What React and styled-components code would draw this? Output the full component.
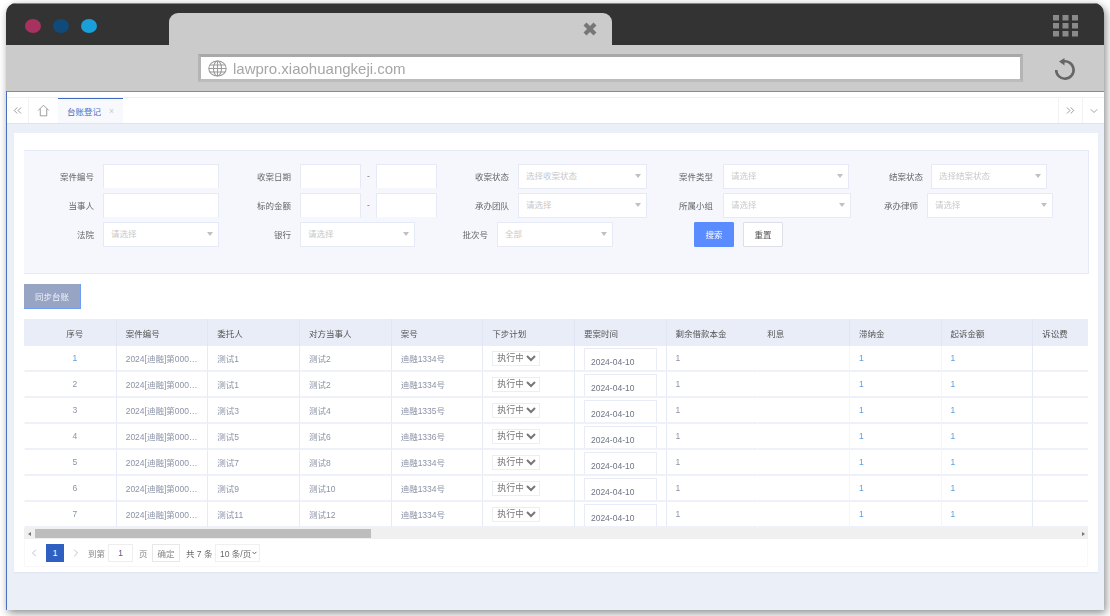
import React from "react";
import styled, { createGlobalStyle } from "styled-components";
import { ChevronsLeft, ChevronsRight, ChevronDown, ChevronLeft, ChevronRight } from "lucide-react";

const GlobalStyle = createGlobalStyle`
  html, body {
    margin: 0;
    height: 616px;
    overflow: hidden;
    background: #fff;
  }
  * { box-sizing: border-box; }
`;

const Browser = styled.div`
  display: flex;
  flex-direction: column;
  width: 1098px;
  height: 607px;
  margin: 3px 0 0 6px;
  border-radius: 10px 10px 0 0;
  overflow: hidden;
  box-shadow: 2px 3px 8px rgba(0, 0, 0, 0.45);
  font-family: "Liberation Sans", "Noto Sans CJK SC", sans-serif;
  font-size: 8.5px;
  filter: blur(0.4px);
`;

const TitleBar = styled.div`
  display: flex;
  align-items: center;
  height: 42px;
  padding: 2px 26px 0 19px;
  background: #333;
  border-top: 1px solid #888;
`;

const Dot = styled.span`
  width: 16px;
  height: 14px;
  margin-right: 12px;
  border-radius: 50%;
  background: ${(p) => p.$color};
`;

const BrowserTab = styled.div`
  display: flex;
  align-items: center;
  justify-content: flex-end;
  align-self: flex-end;
  width: 443px;
  height: 32px;
  margin-left: 60px;
  padding-right: 14px;
  background: #cbcbcb;
  border-radius: 9px 9px 0 0;
`;

const GridIcon = styled.svg`
  margin-left: auto;
`;

const Toolbar = styled.div`
  display: flex;
  align-items: center;
  height: 46px;
  padding-left: 192px;
  background: #cbcbcb;
`;

const Address = styled.div`
  display: flex;
  align-items: center;
  gap: 6px;
  width: 825px;
  height: 28px;
  padding-left: 7px;
  background: #fff;
  border: 3px solid #b4b4b4;
  border-top-color: #a8a8a8;
  border-bottom-color: #bcbcbc;
  color: #a6a6a6;
  font-size: 15px;
`;

const Reload = styled.svg`
  margin: 4px 0 0 30px;
`;

const AppBody = styled.div`
  flex: 1;
  display: flex;
  flex-direction: column;
  min-height: 0;
  background: #ebeff8;
  border-left: 1px solid #4a6fc0;
`;

const TopStrip = styled.div`
  height: 7px;
  background: #fff;
  border-top: 1px solid #8c8c8c;
  border-bottom: 1px solid #f0f0f0;
`;

const TabBar = styled.div`
  display: flex;
  height: 26px;
  background: #fff;
  border-bottom: 1px solid #dfe3ee;
`;

const TabButton = styled.div`
  display: flex;
  align-items: center;
  justify-content: center;
  width: ${(p) => p.$w}px;
  color: #666;
  ${(p) => (p.$side ? `border-${p.$side}: 1px solid #f2f2f2;` : "")}
`;

const PageTab = styled.div`
  display: flex;
  align-items: center;
  width: 65px;
  padding-left: 9px;
  background: #f7f9fd;
  border-top: 1px solid #3f68bf;
  color: #4a6fc0;
`;

const TabClose = styled.span`
  margin-left: 8px;
  color: #c8c8c8;
`;

const Spacer = styled.div`
  flex: 1;
`;

const Content = styled.div`
  flex: 1;
  padding: 9px 6px 0 7px;
`;

const Card = styled.div`
  height: 439px;
  padding: 17px 10px 0;
  background: #fff;
  box-shadow: 0 1px 1px #e2e6f0;
`;

const FilterPanel = styled.div`
  display: grid;
  grid-template-columns: 197px 218px 204px 210px 1fr;
  grid-auto-rows: 25px;
  row-gap: 4px;
  height: 124px;
  margin-right: -1px;
  padding-top: 13px;
  background: #f5f7fc;
  border: 1px solid #e6eaf6;
  border-left-width: 0;
`;

const Field = styled.div`
  display: flex;
  align-items: center;
`;

const FieldLabel = styled.label`
  flex: none;
  width: ${(p) => p.$w || 70}px;
  margin-right: ${(p) => p.$gap || 9}px;
  padding-bottom: 2px;
  text-align: right;
  color: #666;
`;

const TextBox = styled.div`
  flex: none;
  width: ${(p) => p.$w}px;
  height: 25px;
  background: #fff;
  border: 1px solid #e6eaf6;
  border-bottom-color: #f5f7fc;
`;

const RangeDash = styled.span`
  flex: none;
  width: 15px;
  padding-bottom: 2px;
  text-align: center;
  color: #777;
`;

const SelectBox = styled.div`
  position: relative;
  flex: none;
  display: flex;
  align-items: center;
  width: ${(p) => p.$w}px;
  height: 25px;
  padding: 0 0 3px 7px;
  background: #fff;
  border: 1px solid #e6eaf6;
  color: #c8c8c8;
  &::after {
    content: "";
    position: absolute;
    right: 5px;
    top: 9px;
    border-left: 3.5px solid transparent;
    border-right: 3.5px solid transparent;
    border-top: 4px solid #c0c0c0;
  }
`;

const Actions = styled.div`
  display: flex;
  gap: 9px;
  margin-left: 51px;
`;

const Button = styled.button`
  width: 40px;
  height: 25px;
  padding: 0 0 2px;
  font: inherit;
  border-radius: 1px;
  color: ${(p) => (p.$primary ? "#fff" : "#555")};
  background: ${(p) => (p.$primary ? "#5b8cff" : "#fff")};
  border: 1px solid ${(p) => (p.$primary ? "#5b8cff" : "#dcdfe8")};
`;

const SyncButton = styled.button`
  display: block;
  width: 57px;
  height: 25px;
  margin-top: 10px;
  padding: 0;
  font: inherit;
  color: #eef1f8;
  background: #98a4c4;
  border: none;
  border-right: 1px solid #6f9cf5;
  border-bottom: 1px solid #6f9cf5;
`;

const TableWrap = styled.div`
  width: 1064px;
  margin-top: 10px;
  overflow: hidden;
`;

const Table = styled.table`
  width: 1100px;
  table-layout: fixed;
  border-collapse: separate;
  border-spacing: 0;
`;

const Th = styled.th`
  height: 27px;
  padding: 0 0 0 9px;
  background: #e9edf7;
  border-left: 1px solid ${(p) => (p.$noLine ? "#e9edf7" : "#e2e6f3")};
  text-align: ${(p) => (p.$center ? "center" : "left")};
  font-weight: 400;
  color: #555;
  white-space: nowrap;
`;

const Td = styled.td`
  height: 26px;
  padding: 0 ${(p) => (p.$tight ? 8 : 0)}px 0 9px;
  border-left: 1px solid ${(p) => (p.$noLine ? "#fff" : p.$faint ? "#f4f6fb" : "#e6eaf5")};
  border-bottom: 2px solid #eef1f9;
  text-align: ${(p) => (p.$center ? "center" : "left")};
  vertical-align: ${(p) => (p.$bottom ? "bottom" : "middle")};
  color: ${(p) => (p.$blue ? "#5a9fe0" : "#8b93a6")};
  white-space: nowrap;
  overflow: hidden;
  text-overflow: ellipsis;
`;

const PlanSelect = styled.select`
  display: block;
  width: 48px;
  height: 15px;
  padding: 0;
  font: inherit;
  font-size: 9px;
  color: #777;
  background: #fff;
  border: 1px solid #eceef4;
  border-radius: 0;
`;

const DateInput = styled.input`
  display: block;
  width: 73px;
  height: 22px;
  padding: 4px 0 0 6px;
  font: inherit;
  color: #6d7484;
  background: #fff;
  border: 1px solid #e9ecf6;
  border-bottom: none;
  outline: none;
`;

const ScrollTrack = styled.div`
  display: flex;
  align-items: center;
  width: 1064px;
  height: 11px;
  background: #f0f0f0;
`;

const ScrollArrow = styled.span`
  width: 0;
  height: 0;
  margin: 0 2px 0 ${(p) => (p.$right ? "auto" : "4px")};
  ${(p) => (p.$right ? "margin-right: 3px;" : "")}
  border-top: 2.5px solid transparent;
  border-bottom: 2.5px solid transparent;
  border-${(p) => (p.$right ? "left" : "right")}: 3px solid #777;
`;

const ScrollThumb = styled.div`
  height: 9px;
  margin-left: 2px;
  background: #bdbdbd;
`;

const Pager = styled.div`
  display: flex;
  align-items: center;
  width: 1064px;
  height: 27px;
  margin-top: 1px;
  color: #888;
  border: 1px solid #f8f8f8;
  border-top: none;
`;

const PagerArrow = styled.span`
  display: flex;
  flex: none;
  width: ${(p) => p.$w}px;
  justify-content: center;
  color: #7c86a0;
`;

const PageNumber = styled.span`
  display: flex;
  align-items: center;
  justify-content: center;
  width: 18px;
  height: 18px;
  margin-left: 3px;
  background: #2f5fc0;
  color: #fff;
`;

const PagerText = styled.span`
  flex: none;
  width: ${(p) => p.$w}px;
  margin-left: ${(p) => p.$left || 0}px;
  color: ${(p) => p.$color || "#888"};
  white-space: nowrap;
`;

const PageInput = styled.span`
  display: flex;
  align-items: center;
  justify-content: center;
  width: 25px;
  height: 18px;
  margin: 0 6px 0 3px;
  color: #6a4a8a;
  border: 1px solid #eeeeee;
`;

const PageConfirm = styled.span`
  display: flex;
  align-items: center;
  justify-content: center;
  width: 28px;
  height: 18px;
  margin-left: 4px;
  border: 1px solid #e8e8e8;
`;

const SizeSelect = styled.div`
  display: flex;
  flex: none;
  align-items: center;
  justify-content: space-between;
  width: 45px;
  height: 18px;
  padding: 0 1px 0 4px;
  color: #666;
  background: #fff;
  border: 1px solid #f0f0f0;
  white-space: nowrap;
`;

const columns = ["序号", "案件编号", "委托人", "对方当事人", "案号", "下步计划", "要案时间", "剩余借款本金", "利息", "滞纳金", "起诉金额", "诉讼费"];

const rows = [
  ["测试1", "测试2", "迪融1334号"],
  ["测试1", "测试2", "迪融1334号"],
  ["测试3", "测试4", "迪融1335号"],
  ["测试5", "测试6", "迪融1336号"],
  ["测试7", "测试8", "迪融1334号"],
  ["测试9", "测试10", "迪融1334号"],
  ["测试11", "测试12", "迪融1334号"],
];

const thumbWidth = 336;

function App() {
  return (
    <>
      <GlobalStyle />
      <Browser>
        <TitleBar>
          <Dot $color="#a8325f" />
          <Dot $color="#0f4a7a" />
          <Dot $color="#1a9fdb" />
          <BrowserTab>
            <svg width="16" height="16" viewBox="0 0 16 16">
              <path d="M3 3 L13 13 M13 3 L3 13" stroke="#777" strokeWidth="4.2" />
            </svg>
          </BrowserTab>
          <GridIcon width="25" height="22" viewBox="0 0 25 22" fill="#8a8a8a">
            {[0, 1, 2].map((r) =>
              [0, 1, 2].map((c) => <rect key={`${r}${c}`} x={c * 9.5} y={r * 8} width="6" height="5.5" />)
            )}
          </GridIcon>
        </TitleBar>
        <Toolbar>
          <Address>
            <svg width="19" height="17" viewBox="0 0 19 17" fill="none" stroke="#9a9a9a" strokeWidth="1.1">
              <ellipse cx="9.5" cy="8.5" rx="8.7" ry="7.5" />
              <ellipse cx="9.5" cy="8.5" rx="4" ry="7.5" />
              <path d="M9.5 1 V16 M2 5 H17 M1 8.5 H18 M2 12 H17" />
            </svg>
            lawpro.xiaohuangkeji.com
          </Address>
          <Reload width="24" height="24" viewBox="0 0 24 24" fill="none">
            <path d="M10 3.5 A8.7 8.7 0 1 1 3.2 12" stroke="#666" strokeWidth="2.6" />
            <path d="M11.5 0 V7.5 L6 3.6 Z" fill="#666" />
          </Reload>
        </Toolbar>
        <AppBody>
          <TopStrip />
          <TabBar>
            <TabButton $w={22} $side="right">
              <ChevronsLeft size={13} strokeWidth={1.2} />
            </TabButton>
            <TabButton $w={29}>
              <svg width="13" height="13" viewBox="0 0 16 16" fill="none" stroke="#888" strokeWidth="1">
                <path d="M1.5 8 L8 1.5 L14.5 8 M4 6 V14.5 H12 V6" />
              </svg>
            </TabButton>
            <PageTab>
              台账登记
              <TabClose>×</TabClose>
            </PageTab>
            <Spacer />
            <TabButton $w={24} $side="left">
              <ChevronsRight size={13} strokeWidth={1.2} />
            </TabButton>
            <TabButton $w={22} $side="left">
              <ChevronDown size={12} strokeWidth={1.2} />
            </TabButton>
          </TabBar>
          <Content>
            <Card>
              <FilterPanel>
                <Field>
                  <FieldLabel>案件编号</FieldLabel>
                  <TextBox $w={116} />
                </Field>
                <Field>
                  <FieldLabel>收案日期</FieldLabel>
                  <TextBox $w={61} />
                  <RangeDash>-</RangeDash>
                  <TextBox $w={61} />
                </Field>
                <Field>
                  <FieldLabel>收案状态</FieldLabel>
                  <SelectBox $w={129}>选择收案状态</SelectBox>
                </Field>
                <Field>
                  <FieldLabel $gap={10}>案件类型</FieldLabel>
                  <SelectBox $w={126}>请选择</SelectBox>
                </Field>
                <Field>
                  <FieldLabel $gap={8}>结案状态</FieldLabel>
                  <SelectBox $w={116}>选择结案状态</SelectBox>
                </Field>

                <Field>
                  <FieldLabel>当事人</FieldLabel>
                  <TextBox $w={116} />
                </Field>
                <Field>
                  <FieldLabel>标的金额</FieldLabel>
                  <TextBox $w={61} />
                  <RangeDash>-</RangeDash>
                  <TextBox $w={61} />
                </Field>
                <Field>
                  <FieldLabel>承办团队</FieldLabel>
                  <SelectBox $w={129}>请选择</SelectBox>
                </Field>
                <Field>
                  <FieldLabel $gap={10}>所属小组</FieldLabel>
                  <SelectBox $w={128}>请选择</SelectBox>
                </Field>
                <Field>
                  <FieldLabel $w={65}>承办律师</FieldLabel>
                  <SelectBox $w={126}>请选择</SelectBox>
                </Field>

                <Field>
                  <FieldLabel>法院</FieldLabel>
                  <SelectBox $w={116}>请选择</SelectBox>
                </Field>
                <Field>
                  <FieldLabel>银行</FieldLabel>
                  <SelectBox $w={115}>请选择</SelectBox>
                </Field>
                <Field>
                  <FieldLabel $w={49}>批次号</FieldLabel>
                  <SelectBox $w={116}>全部</SelectBox>
                </Field>
                <Actions>
                  <Button $primary>搜索</Button>
                  <Button>重置</Button>
                </Actions>
              </FilterPanel>

              <SyncButton>同步台账</SyncButton>

              <TableWrap>
                <Table>
                  <thead>
                    <tr>
                      {columns.map((c, i) => (
                        <Th key={c} $center={i === 0} $noLine={i === 0 || i === 8}>{c}</Th>
                      ))}
                    </tr>
                  </thead>
                  <tbody>
                    {rows.map((r, i) => (
                      <tr key={i}>
                        <Td $center $noLine $blue={i === 0}>{i + 1}</Td>
                        <Td $tight>2024[迪融]第0001号</Td>
                        <Td>{r[0]}</Td>
                        <Td>{r[1]}</Td>
                        <Td>{r[2]}</Td>
                        <Td>
                          <PlanSelect defaultValue="执行中">
                            <option>执行中</option>
                          </PlanSelect>
                        </Td>
                        <Td $bottom>
                          <DateInput readOnly value="2024-04-10" />
                        </Td>
                        <Td>1</Td>
                        <Td $noLine />
                        <Td $faint $blue>1</Td>
                        <Td $faint $blue>1</Td>
                        <Td />
                      </tr>
                    ))}
                  </tbody>
                </Table>
              </TableWrap>
              <ScrollTrack>
                <ScrollArrow />
                <ScrollThumb style={{ width: thumbWidth }} />
                <ScrollArrow $right />
              </ScrollTrack>
              <Pager>
                <PagerArrow $w={18}><ChevronLeft size={12} strokeWidth={1} /></PagerArrow>
                <PageNumber>1</PageNumber>
                <PagerArrow $w={24}><ChevronRight size={12} strokeWidth={1} /></PagerArrow>
                <PagerText $w={17}>到第</PagerText>
                <PageInput>1</PageInput>
                <PagerText $w={9}>页</PagerText>
                <PageConfirm>确定</PageConfirm>
                <PagerText $w={29} $left={6} $color="#666">共 7 条</PagerText>
                <SizeSelect>
                  10 条/页
                  <ChevronDown size={8} strokeWidth={3.5} />
                </SizeSelect>
              </Pager>
            </Card>
          </Content>
        </AppBody>
      </Browser>
    </>
  );
}

export default App;
